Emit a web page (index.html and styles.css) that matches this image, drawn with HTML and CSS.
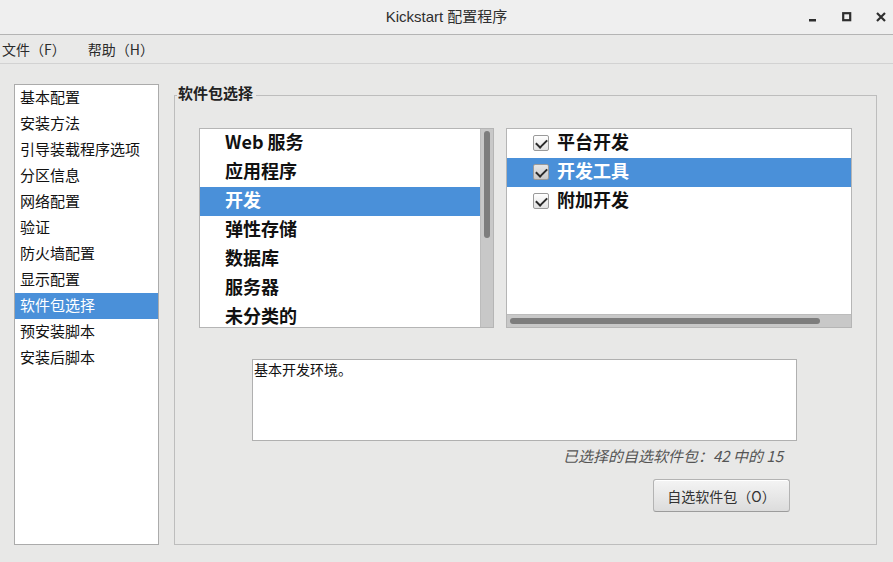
FILE: index.html
```html
<!DOCTYPE html>
<html lang="zh-CN">
<head>
  <meta charset="UTF-8">
  <meta name="viewport" content="width=device-width, initial-scale=1.0">
  <link rel="stylesheet" href="styles.css">
  <title>Kickstart 配置程序</title>
</head>
<body>
  <div class="window">
    <header class="titlebar">
      <div></div>
      <div class="title">Kickstart 配置程序</div>
      <div class="wm-buttons">
        <svg width="10" height="10" viewBox="0 0 10 10"><rect x="1" y="7" width="7" height="2.5" fill="#2e2e2e"/></svg>
        <svg width="10" height="10" viewBox="0 0 10 10"><rect x="1.2" y="1.2" width="7" height="7" fill="none" stroke="#2e2e2e" stroke-width="2.2"/></svg>
        <svg width="10" height="10" viewBox="0 0 10 10"><path d="M1 1 L9 9 M9 1 L1 9" stroke="#2e2e2e" stroke-width="2.2"/></svg>
      </div>
    </header>
    <nav class="menubar">
      <span>文件（F）</span>
      <span>帮助（H）</span>
    </nav>
    <main class="main">
      <ul class="sidebar">
        <li>基本配置</li>
        <li>安装方法</li>
        <li>引导装载程序选项</li>
        <li>分区信息</li>
        <li>网络配置</li>
        <li>验证</li>
        <li>防火墙配置</li>
        <li>显示配置</li>
        <li class="selected">软件包选择</li>
        <li>预安装脚本</li>
        <li>安装后脚本</li>
      </ul>
      <fieldset class="group">
        <legend>软件包选择</legend>
        <div class="group-body">
          <div class="lists">
            <div class="listbox categories">
              <ul>
                <li>Web 服务</li>
                <li>应用程序</li>
                <li class="selected">开发</li>
                <li>弹性存储</li>
                <li>数据库</li>
                <li>服务器</li>
                <li>未分类的</li>
              </ul>
              <div class="vscroll"><div class="thumb"></div></div>
            </div>
            <div class="listbox packages">
              <ul>
                <li><span class="check"></span>平台开发</li>
                <li class="selected"><span class="check"></span>开发工具</li>
                <li><span class="check"></span>附加开发</li>
              </ul>
              <div class="hscroll"><div class="thumb"></div></div>
            </div>
          </div>
          <div class="description">基本开发环境。</div>
          <p class="count">已选择的自选软件包：42 中的 15</p>
          <button class="btn">自选软件包（O）</button>
        </div>
      </fieldset>
    </main>
  </div>
</body>
</html>
```

FILE: styles.css
```css
* {
  box-sizing: border-box;
}
body {
  margin: 0;
  padding: 0;
  background: #e8e8e7;
  color: #1a1a1a;
  font-family: "Noto Sans CJK SC", "Liberation Sans", sans-serif;
  font-size: 14px;
}
.window {
  width: 893px;
  height: 562px;
  overflow: hidden;
}
.titlebar {
  height: 35px;
  display: grid;
  grid-template-columns: 1fr auto 1fr;
  align-items: center;
  background: #efefef;
  border-bottom: 1px solid #b4b4b4;
}
.title {
  font-family: "Liberation Sans", "Noto Sans CJK SC", sans-serif;
  font-size: 15px;
  color: #2e2e2e;
  padding-bottom: 3px;
}
.wm-buttons {
  display: flex;
  justify-content: flex-end;
  align-items: center;
  gap: 24px;
  padding-right: 7px;
  padding-bottom: 1px;
}
.menubar {
  height: 29px;
  display: flex;
  align-items: center;
  gap: 22px;
  padding-left: 2px;
  padding-bottom: 1px;
  background: #e9e9e8;
  border-bottom: 1px solid #d2d2d2;
  color: #2b2b2b;
}
.main {
  display: flex;
  align-items: flex-start;
  padding: 20px 0 0 14px;
}
.sidebar {
  list-style: none;
  margin: 0;
  padding: 0;
  width: 145px;
  height: 461px;
  background: #fff;
  border: 1px solid #ababab;
  font-size: 15px;
}
.sidebar li {
  height: 26px;
  line-height: 24px;
  padding-left: 5px;
  color: #111;
}
.sidebar li.selected {
  background: #4a90d9;
  color: #fff;
}
.group {
  margin: 1px 0 0 15px;
  padding: 0;
  width: 703px;
  height: 460px;
  border: 1px solid #bdbdbd;
}
.group legend {
  margin-left: 2px;
  padding: 0 3px 4px 1px;
  font-size: 15px;
  line-height: 16px;
  font-weight: bold;
  color: #222;
}
.group-body {
  display: flex;
  flex-direction: column;
}
.lists {
  display: flex;
  gap: 12px;
  margin: 23px 0 0 24px;
}
.listbox {
  height: 200px;
  background: #fff;
  border: 1px solid #b5b5b5;
  overflow: hidden;
}
.listbox ul {
  list-style: none;
  margin: 0;
  padding: 0;
}
.listbox li {
  display: flex;
  align-items: center;
  height: 29px;
  padding-bottom: 5px;
  font-size: 18px;
  font-weight: bold;
  color: #111;
}
.listbox li.selected {
  background: #4a90d9;
  color: #fff;
}
.categories {
  width: 295px;
  display: flex;
}
.categories ul {
  flex: 1;
}
.categories li {
  padding-left: 25px;
}
.vscroll {
  width: 13px;
  height: 100%;
  background: #c8c8c8;
  border-left: 1px solid #bcbcbc;
  padding: 2px 3px 0 3px;
}
.vscroll .thumb {
  height: 107px;
  background: #7d7d7d;
  border-radius: 3px;
}
.packages {
  width: 346px;
  display: flex;
  flex-direction: column;
}
.packages ul {
  flex: 1;
}
.packages li {
  padding-left: 26px;
  gap: 8px;
}
.check {
  position: relative;
  width: 16px;
  height: 16px;
  margin-top: 4px;
  border: 1px solid #9a9a9a;
  border-radius: 2px;
  background: linear-gradient(#ffffff, #e2e2e2);
}
.selected .check {
  background: linear-gradient(#e6e6e6, #c9c9c9);
}
.check::after {
  content: "";
  position: absolute;
  left: 4px;
  top: 1px;
  width: 5px;
  height: 9px;
  border-right: 2.5px solid #2a2a2a;
  border-bottom: 2.5px solid #2a2a2a;
  transform: rotate(45deg);
}
.hscroll {
  height: 13px;
  background: #c8c8c8;
  border-top: 1px solid #bcbcbc;
  padding: 3px 0 0 3px;
}
.hscroll .thumb {
  width: 310px;
  height: 6px;
  background: #7d7d7d;
  border-radius: 3px;
}
.description {
  margin: 31px 0 0 77px;
  width: 545px;
  height: 82px;
  background: #fff;
  border: 1px solid #b0b0b0;
  padding: 0 0 0 1px;
  font-size: 14px;
  line-height: 18px;
  color: #111;
}
.count {
  align-self: flex-end;
  margin: 5px 93px 0 0;
  line-height: 20px;
  font-style: italic;
  color: #555;
  font-size: 15px;
}
.btn {
  align-self: flex-end;
  margin: 13px 86px 0 0;
  width: 137px;
  height: 33px;
  font-family: inherit;
  font-size: 14px;
  color: #333;
  background: linear-gradient(#f4f4f4, #dcdcdc);
  border: 1px solid #b3b3b3;
  border-bottom-color: #9c9c9c;
  border-radius: 3px;
  box-shadow: inset 0 1px 0 #fff;
}
```
